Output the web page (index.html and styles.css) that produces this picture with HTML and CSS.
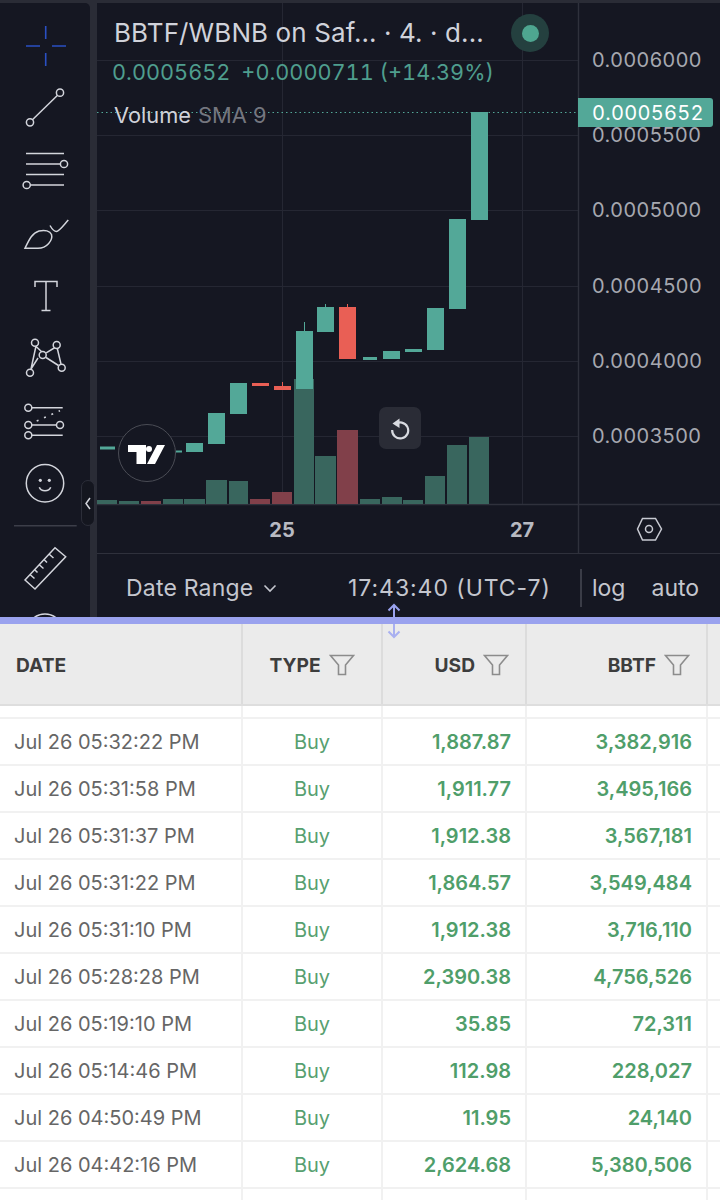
FILE: index.html
```html
<!DOCTYPE html>
<html lang="en">
<head>
<meta charset="utf-8">
<title>BBTF/WBNB chart</title>
<link rel="stylesheet" href="styles.css">
</head>
<body>
<div class="page">
  <section class="terminal">
    <nav class="tools">
      <svg class="tool-art" width="90" height="617" viewBox="0 0 90 617">
        <g class="cross"><path d="M45.7 26V39M45.7 53V66M26 46H40M52 46H66"/></g>
        <g class="ink">
          <path d="M32.7 119.5 57.3 95.5"/><circle cx="30" cy="122.3" r="3.6"/><circle cx="60" cy="92.7" r="3.6"/>
          <path d="M26 153.5H64M26 164H60.3M26 174.5H64M30.4 185H64"/><circle cx="64" cy="164" r="3.6"/><circle cx="26.7" cy="185" r="3.6"/>
          <path d="M25 248.3H38C47 248.3 53 240 51.500 234.500C50 231 45 229.500 39 231C32 233 29 240 25 248.300Z"/><path d="M50 225.500C52 229 54 231.500 56.500 231.500C59 231.500 63 226 68.300 220"/>
          <path d="M35 287V281.500H57V287M46 281.500V310.500M41.500 310.500H50.500"/>
          <path d="M35.800 346.300 42 352 M38 358 31 369M36 346 31 369M46.200 352.800 55 347.500M46 357.500 58.500 365.500M57.300 348.500 61 364"/>
          <circle cx="35" cy="342.700" r="3.500"/><circle cx="56.700" cy="345" r="3.500"/><circle cx="42.700" cy="355" r="3.500"/><circle cx="30" cy="372.700" r="3.500"/><circle cx="61.700" cy="367.700" r="3.500"/>
          <path d="M32 407.700H62.700M32 425H56.300M32 435.300H62.700"/><path class="dots" d="M36.700 421 60 410.700"/>
          <circle cx="28.300" cy="407.700" r="3.500"/><circle cx="28.300" cy="425" r="3.500"/><circle cx="60" cy="425" r="3.500"/><circle cx="28.300" cy="435.300" r="3.500"/>
          <circle cx="45" cy="483.300" r="18.700"/><path d="M39.300 487.300C41 492 49 492 50.700 487.300"/>
          <path d="M25 580 55 547.700 65.700 556.700 35 589ZM30 574.500 34.500 578.500M34.500 569.500 37.500 572.500M39 564.500 43.500 568.500M44 559.500 47 562.500M49 554 53.500 558"/>
          <circle cx="45" cy="632" r="18"/>
        </g>
        <circle class="eye" cx="40.300" cy="480.300" r="1.600"/><circle class="eye" cx="49.300" cy="480.300" r="1.600"/>
        <path class="tool-rule" d="M14 525.700H76.700"/>
      </svg>
    </nav>
    <div class="gutter"></div>
    <div class="workspace">
      <svg class="chart" width="623" height="550" viewBox="97 3 623 550">
        <path class="grid" d="M97 60.500H578M97 135.500H578M97 210.500H578M97 286.500H578M97 361.500H578M97 436.500H578M282.500 3V504M522.500 3V504"/>
        <path class="frame" d="M578.500 3V553M97 504.500H720"/>
        <path class="last-line" d="M97 112.500H576"/>

        <g class="vol-up">
          <rect x="97" y="500" width="20" height="4"/><rect x="119" y="501" width="20" height="3"/><rect x="163" y="499" width="20" height="5"/>
          <rect x="184" y="499" width="21" height="5"/><rect x="206" y="480" width="21" height="24"/><rect x="229" y="481" width="19" height="23"/>
          <rect x="294" y="379" width="20" height="125"/><rect x="315" y="456" width="21" height="48"/><rect x="360" y="499" width="20" height="5"/>
          <rect x="382" y="497" width="20" height="7"/><rect x="403" y="500" width="20" height="4"/><rect x="425" y="476" width="20" height="28"/>
          <rect x="447" y="445" width="20" height="59"/><rect x="469" y="437" width="20" height="67"/>
        </g>
        <g class="vol-down">
          <rect x="141" y="501" width="20" height="3"/><rect x="250" y="499" width="20" height="5"/><rect x="272" y="492" width="20" height="12"/><rect x="337" y="430" width="21" height="74"/>
        </g>
        <g class="up">
          <rect x="100" y="446.500" width="15" height="3"/><rect x="176" y="450.500" width="6" height="2"/><rect x="186" y="443" width="17" height="9"/>
          <rect x="208" y="413" width="17" height="31"/><rect x="230" y="383" width="17" height="31"/><rect x="296" y="331" width="17" height="58"/>
          <rect x="304" y="322" width="1" height="9"/><rect x="317" y="307" width="17" height="25"/><rect x="325" y="304" width="1" height="3"/>
          <rect x="363" y="357" width="14" height="3"/><rect x="383" y="351" width="17" height="8"/><rect x="405" y="349" width="17" height="3"/>
          <rect x="427" y="308" width="17" height="42"/><rect x="449" y="219" width="17" height="90"/><rect x="471" y="112" width="17" height="108"/>
        </g>
        <g class="down">
          <rect x="252" y="383" width="17" height="3"/><rect x="274" y="386" width="17" height="4"/><rect x="282" y="382" width="1" height="4"/>
          <rect x="339" y="307" width="17" height="52"/><rect x="347" y="304" width="1" height="3"/>
        </g>

        <g class="tick">
          <text x="592" y="67">0.0006000</text><text x="592" y="142">0.0005500</text><text x="592" y="217">0.0005000</text>
          <text x="592" y="293">0.0004500</text><text x="592" y="368">0.0004000</text><text x="592" y="443">0.0003500</text>
        </g>
        <text class="date" x="282" y="537">25</text><text class="date" x="522" y="537">27</text>
        <path class="gear" d="M642.500 518.500H655.500L661.500 529 655.500 540H642.500L637.500 529Z"/><circle class="gear" cx="649" cy="529" r="3.500"/>
      </svg>

      <div class="legend">
        <div class="legend-title">BBTF/WBNB on Saf... · 4. · d...</div>
        <div class="legend-values"><span>0.0005652</span><span>+0.0000711 (+14.39%)</span></div>
        <div class="legend-volume">Volume <span>SMA 9</span></div>
      </div>
      <div class="status"><i></i></div>
      <div class="price-tag">0.0005652</div>
      <div class="logo">
        <svg width="38" height="20" viewBox="0 0 38 20"><path d="M0 0H18V19H8.500V7H0ZM29 0H37L27 19H19Z"/><circle cx="21" cy="4" r="3"/></svg>
      </div>
      <button class="reset" type="button">
        <svg width="24" height="24" viewBox="0 0 24 24"><path d="M7 8.300A8 8 0 1 1 4.200 14"/><path class="fill" d="M11.500 2.500V12L4.500 7.500Z"/></svg>
      </button>

      <footer class="footer">
        <span class="range">Date Range <svg width="14" height="9" viewBox="0 0 14 9"><path d="M1.500 1.500 7 7 12.500 1.500"/></svg></span>
        <span class="clock">17:43:40 (UTC-7)</span>
        <span class="opts"><span>log</span><span>auto</span></span>
      </footer>
    </div>
    <button class="collapse" type="button"><svg width="6" height="13" viewBox="0 0 6 13"><path d="M5 1 1 6.500 5 12"/></svg></button>
  </section>

  <div class="resize-bar"></div>
  <svg class="resize-arrows" width="16" height="36" viewBox="0 0 16 36"><path d="M8 2V14M2.500 7.500 8 2 13.500 7.500"/><path class="low" d="M8 21V34M2.500 28.500 8 34 13.500 28.500"/></svg>

  <section class="trades">
    <div class="row head">
      <div class="cell">DATE</div>
      <div class="cell center">TYPE <svg class="filter" viewBox="0 0 26 22"><path d="M1.500 1.500H24.500L16.500 11V20.500H9.500V11Z"/></svg></div>
      <div class="cell right">USD <svg class="filter" viewBox="0 0 26 22"><path d="M1.500 1.500H24.500L16.500 11V20.500H9.500V11Z"/></svg></div>
      <div class="cell right">BBTF <svg class="filter" viewBox="0 0 26 22"><path d="M1.500 1.500H24.500L16.500 11V20.500H9.500V11Z"/></svg></div>
      <div class="cell"></div>
    </div>
    <div class="body">
      <div class="row clipped"><div class="cell"></div><div class="cell center buy">Buy</div><div class="cell right num"></div><div class="cell right num"></div><div class="cell"></div></div>
      <div class="row"><div class="cell when">Jul 26 05:32:22 PM</div><div class="cell center buy">Buy</div><div class="cell right num">1,887.87</div><div class="cell right num">3,382,916</div><div class="cell"></div></div>
      <div class="row"><div class="cell when">Jul 26 05:31:58 PM</div><div class="cell center buy">Buy</div><div class="cell right num">1,911.77</div><div class="cell right num">3,495,166</div><div class="cell"></div></div>
      <div class="row"><div class="cell when">Jul 26 05:31:37 PM</div><div class="cell center buy">Buy</div><div class="cell right num">1,912.38</div><div class="cell right num">3,567,181</div><div class="cell"></div></div>
      <div class="row"><div class="cell when">Jul 26 05:31:22 PM</div><div class="cell center buy">Buy</div><div class="cell right num">1,864.57</div><div class="cell right num">3,549,484</div><div class="cell"></div></div>
      <div class="row"><div class="cell when">Jul 26 05:31:10 PM</div><div class="cell center buy">Buy</div><div class="cell right num">1,912.38</div><div class="cell right num">3,716,110</div><div class="cell"></div></div>
      <div class="row"><div class="cell when">Jul 26 05:28:28 PM</div><div class="cell center buy">Buy</div><div class="cell right num">2,390.38</div><div class="cell right num">4,756,526</div><div class="cell"></div></div>
      <div class="row"><div class="cell when">Jul 26 05:19:10 PM</div><div class="cell center buy">Buy</div><div class="cell right num">35.85</div><div class="cell right num">72,311</div><div class="cell"></div></div>
      <div class="row"><div class="cell when">Jul 26 05:14:46 PM</div><div class="cell center buy">Buy</div><div class="cell right num">112.98</div><div class="cell right num">228,027</div><div class="cell"></div></div>
      <div class="row"><div class="cell when">Jul 26 04:50:49 PM</div><div class="cell center buy">Buy</div><div class="cell right num">11.95</div><div class="cell right num">24,140</div><div class="cell"></div></div>
      <div class="row"><div class="cell when">Jul 26 04:42:16 PM</div><div class="cell center buy">Buy</div><div class="cell right num">2,624.68</div><div class="cell right num">5,380,506</div><div class="cell"></div></div>
      <div class="row"><div class="cell"></div><div class="cell"></div><div class="cell"></div><div class="cell"></div><div class="cell"></div></div>
    </div>
  </section>
</div>
</body>
</html>
```

FILE: styles.css
```css
* { box-sizing: border-box; }
html, body { margin: 0; padding: 0; }
body { background: #fff; font-family: Inter, "Liberation Sans", sans-serif; }
.page { position: relative; width: 720px; height: 1200px; overflow: hidden; }

.terminal { position: relative; display: flex; height: 617px; padding-top: 3px; background: #2a2c36; color: #c8cad2; }
.tools { width: 90px; margin-top: 0; background: #151722; border-top-right-radius: 5px; overflow: hidden; }
.tool-art { display: block; margin-top: -3px; }
.gutter { width: 7px; }
.workspace { position: relative; flex: 1; background: #151722; }
.chart { display: block; }

.cross path { fill: none; stroke: #2a50c4; stroke-width: 1.6; }
.ink path, .ink circle { fill: #151722; stroke: #d3d5dc; stroke-width: 1.5; }
.ink path { fill: none; }
.ink .dots { stroke-dasharray: 2 6; }
.eye { fill: #d3d5dc; }
.tool-rule { stroke: #3c3e49; stroke-width: 1.4; }

.grid { fill: none; stroke: #252733; stroke-width: 1; }
.frame { fill: none; stroke: #2f313c; stroke-width: 1.4; }
.last-line { stroke: #53a898; stroke-width: 1.2; stroke-dasharray: 1.5 3; }
.vol-up { fill: #39665e; }
.vol-down { fill: #81404a; }
.up { fill: #53a898; }
.down { fill: #e95f55; }
.tick text { fill: #a6a8b0; font-size: 20px; letter-spacing: 0.5px; font-family: Inter, sans-serif; }
.date { fill: #b8bac2; font-size: 20px; font-weight: 700; text-anchor: middle; font-family: Inter, sans-serif; }
.gear { fill: none; stroke: #c8cad2; stroke-width: 1.5; }

.legend { position: absolute; left: 17px; top: 14px; }
.legend-title { font-size: 26px; line-height: 32px; letter-spacing: 0.1px; color: #d0d2da; white-space: nowrap; }
.legend-values { display: flex; gap: 11px; font-size: 21.7px; line-height: 28px; color: #4f9e8e; white-space: nowrap; margin-left: -2px; margin-top: 9px; font-variant-numeric: tabular-nums; }
.legend-volume { margin-top: 15px; font-size: 21.8px; line-height: 28px; color: #d0d2da; }
.legend-volume span { color: #74767f; margin-left: 1px; }

.status { position: absolute; left: 414px; top: 11px; width: 38px; height: 38px; border-radius: 50%; background: #24403f; display: flex; align-items: center; justify-content: center; }
.status i { display: block; width: 17px; height: 17px; border-radius: 50%; background: #4ea690; }

.price-tag { position: absolute; left: 481px; top: 95px; width: 135px; height: 29px; padding-left: 14px; background: #53a898; border-radius: 0 3px 3px 0; color: #fff; font-size: 20px; line-height: 30px; letter-spacing: 0.3px; font-variant-numeric: tabular-nums; }

.logo { position: absolute; left: 21px; top: 421px; width: 58px; height: 58px; border: 1.5px solid #4a4c55; border-radius: 50%; background: #151722; display: flex; align-items: center; justify-content: center; }
.logo svg { fill: #fff; margin-top: 4px; }

.reset { position: absolute; left: 282px; top: 404px; width: 42px; height: 42px; padding: 0; border: 0; border-radius: 7px; background: #2a2c36; display: flex; align-items: center; justify-content: center; }
.reset path { fill: none; stroke: #d8dae0; stroke-width: 2.2; }
.reset .fill { fill: #d8dae0; stroke: none; }

.footer { display: flex; align-items: center; height: 61px; padding: 8px 20px 0 29px; border-top: 1px solid #2f313c; font-size: 23px; color: #c4c6ce; white-space: nowrap; }
.range { display: flex; align-items: center; gap: 10px; width: 222px; letter-spacing: 0.2px; }
.range svg { fill: none; stroke: #c4c6ce; stroke-width: 1.6; }
.clock { width: 232px; letter-spacing: 0.95px; }
.opts { display: flex; gap: 26px; height: 38px; align-items: center; border-left: 2px solid #3a3c47; padding-left: 10px; }

.collapse { position: absolute; left: 81px; top: 480px; width: 14px; height: 46px; padding: 0; border: 1.5px solid #2c2e39; border-radius: 7px; background: #14161f; display: flex; align-items: center; justify-content: center; }
.collapse path { fill: none; stroke: #d3d5dc; stroke-width: 1.5; }

.resize-bar { height: 7px; background: #9aa2ee; }
.resize-arrows { position: absolute; left: 386px; top: 603px; }
.resize-arrows path { fill: none; stroke: #9aa2ee; stroke-width: 2; }
.resize-arrows .low { stroke: #a9b0f0; }

.row { display: grid; grid-template-columns: 243px 140px 144px 181px 1fr; height: 47px; border-bottom: 2px solid #f1f1f1; }
.cell { display: flex; align-items: center; gap: 9px; padding: 0 14px; border-right: 2px solid #f1f1f1; white-space: nowrap; font-size: 20px; }
.center { justify-content: center; }
.right { justify-content: flex-end; }
.head { height: 82px; background: #ebebeb; border-bottom: 2px solid #dedede; }
.head .cell { padding-top: 2px; font-size: 19.2px; font-weight: 700; color: #3d3d3d; border-right-color: #dcdcdc; gap: 8px; }
.head .cell:first-child { padding-left: 16px; }
.filter { width: 26px; height: 22px; flex: none; }
.filter path { fill: none; stroke: #8c8c8c; stroke-width: 1.6; }
.head .right { padding-right: 16px; }
.body { height: 494px; overflow: hidden; background: #fff; }
.clipped { margin-top: -34px; }
.when { color: #666; }
.buy { color: #57a070; }
.num { color: #4f9e6a; font-weight: 600; }
```
